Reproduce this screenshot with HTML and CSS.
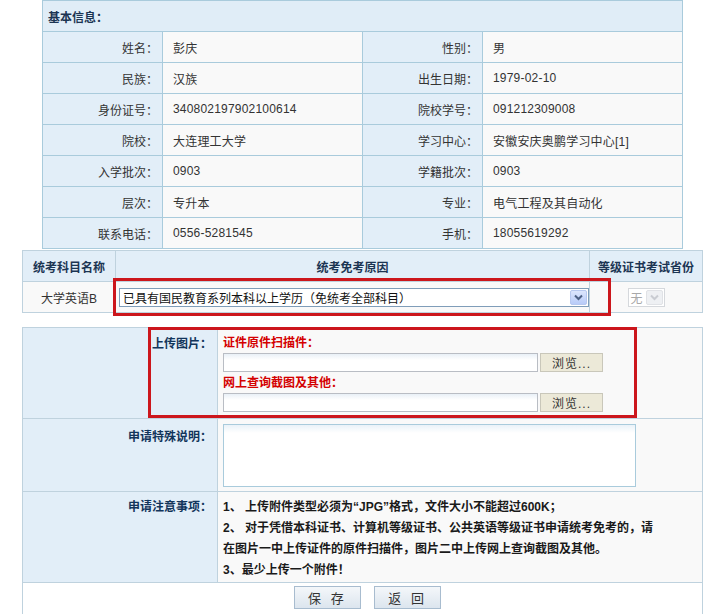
FILE: index.html
```html
<!DOCTYPE html>
<html>
    <head>
        <meta charset="utf-8">
        <title>统考免考申请</title>
        <link rel="stylesheet" href="styles.css">
    </head>
    <body>
        <div class="page">

            <table class="info">
                <col class="c-label"><col class="c-value"><col class="c-label"><col class="c-value">
                <tr>
                    <th colspan="4" class="info-title">基本信息：</th>
                </tr>
                <tr>
                    <td class="label">姓名：</td><td class="value">彭庆</td>
                    <td class="label">性别：</td><td class="value">男</td>
                </tr>
                <tr>
                    <td class="label">民族：</td><td class="value">汉族</td>
                    <td class="label">出生日期：</td><td class="value">1979-02-10</td>
                </tr>
                <tr>
                    <td class="label">身份证号：</td><td class="value">340802197902100614</td>
                    <td class="label">院校学号：</td><td class="value">091212309008</td>
                </tr>
                <tr>
                    <td class="label">院校：</td><td class="value">大连理工大学</td>
                    <td class="label">学习中心：</td><td class="value">安徽安庆奥鹏学习中心[1]</td>
                </tr>
                <tr>
                    <td class="label">入学批次：</td><td class="value">0903</td>
                    <td class="label">学籍批次：</td><td class="value">0903</td>
                </tr>
                <tr>
                    <td class="label">层次：</td><td class="value">专升本</td>
                    <td class="label">专业：</td><td class="value">电气工程及其自动化</td>
                </tr>
                <tr>
                    <td class="label">联系电话：</td><td class="value">0556-5281545</td>
                    <td class="label">手机：</td><td class="value">18055619292</td>
                </tr>
            </table>

            <table class="exempt">
                <col class="c-subject"><col class="c-reason"><col class="c-province">
                <tr>
                    <th>统考科目名称</th>
                    <th>统考免考原因</th>
                    <th>等级证书考试省份</th>
                </tr>
                <tr>
                    <td class="subject">大学英语B</td>
                    <td class="reason">
                        <div class="select-box">
                            <span class="select-text">已具有国民教育系列本科以上学历（免统考全部科目）</span>
                            <span class="select-arrow">
                                <svg width="9" height="7" viewBox="0 0 9 7"><polyline points="1,1.5 4.5,5 8,1.5" fill="none" stroke="#4d6185" stroke-width="2"/></svg>
                            </span>
                        </div>
                    </td>
                    <td class="province">
                        <div class="select-box select-off">
                            <span class="select-text">无</span>
                            <span class="select-arrow">
                                <svg width="9" height="7" viewBox="0 0 9 7"><polyline points="1,1.5 4.5,5 8,1.5" fill="none" stroke="#c9ccd2" stroke-width="2"/></svg>
                            </span>
                        </div>
                    </td>
                </tr>
            </table>

            <table class="apply">
                <col class="c-name"><col class="c-field">
                <tr class="row-upload">
                    <td class="name">上传图片：</td>
                    <td class="field">
                        <div class="upload-title">证件原件扫描件：</div>
                        <div class="upload-line">
                            <input class="upload-path" type="text">
                            <button class="browse-button">浏览...</button>
                        </div>
                        <div class="upload-title">网上查询截图及其他：</div>
                        <div class="upload-line">
                            <input class="upload-path" type="text">
                            <button class="browse-button">浏览...</button>
                        </div>
                    </td>
                </tr>
                <tr class="row-remark">
                    <td class="name">申请特殊说明：</td>
                    <td class="field">
                        <textarea class="remark"></textarea>
                    </td>
                </tr>
                <tr class="row-notes">
                    <td class="name">申请注意事项：</td>
                    <td class="field notes">
                        1、 上传附件类型必须为“JPG”格式，文件大小不能超过600K；<br>
                        2、 对于凭借本科证书、计算机等级证书、公共英语等级证书申请统考免考的，请<br>
                        在图片一中上传证件的原件扫描件，图片二中上传网上查询截图及其他。<br>
                        3、最少上传一个附件！
                    </td>
                </tr>
                <tr class="row-actions">
                    <td colspan="2" class="actions">
                        <button class="form-button">保 存</button>
                        <button class="form-button">返 回</button>
                    </td>
                </tr>
            </table>

            <div class="mark mark-reason"></div>
            <div class="mark mark-upload"></div>

        </div>
    </body>
</html>
```

FILE: styles.css
```css
body {
    margin: 0;
    background: #ffffff;
    color: #333333;
    font-family: "Liberation Sans", "Noto Sans CJK SC", sans-serif;
    font-size: 12px;
}

.page {
    position: relative;
    width: 709px;
}

table {
    border-collapse: collapse;
    table-layout: fixed;
}

td, th {
    padding: 0;
    font-size: 12px;
}

/* basic info */

.info {
    margin-left: 42px;
    width: 641px;
}

.info .c-label {
    width: 120px;
}

.info .c-value {
    width: 200px;
}

.info td, .info th {
    border: 1px solid #a9cbdc;
    height: 30px;
}

.info-title {
    background: #e0edf7;
    color: #1c3553;
    text-align: left;
    padding-left: 5px;
    font-weight: bold;
}

.label {
    background: #e2eef8;
    text-align: right;
    padding-right: 4px;
}

.value {
    background: #f9f9f9;
    padding-left: 10px;
    letter-spacing: 0.2px;
}

/* exemption subject */

.exempt {
    margin: 1px 0 0 22px;
    width: 681px;
}

.exempt .c-subject {
    width: 93px;
}

.exempt .c-reason {
    width: 474px;
}

.exempt .c-province {
    width: 113px;
}

.exempt td, .exempt th {
    border: 1px solid #bfd2de;
    height: 30px;
}

.exempt th {
    background: #e2eef8;
    color: #1c3553;
    font-weight: bold;
}

.exempt td {
    background: #f9f9f9;
}

.subject {
    text-align: center;
}

.reason {
    padding-left: 3px;
}

.province {
    text-align: center;
}

.select-box {
    display: inline-flex;
    align-items: center;
    box-sizing: border-box;
    width: 470px;
    height: 19px;
    border: 1px solid #7f9db9;
    background: #ffffff;
    vertical-align: middle;
}

.select-text {
    flex: 1;
    padding-left: 3px;
    text-align: left;
    color: #111111;
    white-space: nowrap;
    overflow: hidden;
}

.select-arrow {
    display: flex;
    align-items: center;
    justify-content: center;
    box-sizing: border-box;
    width: 17px;
    height: 15px;
    margin-right: 1px;
    border: 1px solid #b7c8ef;
    border-radius: 2px;
    background: linear-gradient(#dce6fd, #b8cbf8);
}

.select-off {
    width: 37px;
    border-color: #d5d8dc;
}

.select-off .select-text {
    color: #a8a8a8;
    padding-left: 2px;
}

.select-off .select-arrow {
    border-color: #e0e2e6;
    background: #eef0f3;
}

/* application */

.apply {
    margin: 14px 0 0 22px;
    width: 681px;
}

.apply .c-name {
    width: 195px;
}

.apply td {
    border: 1px solid #bfd2de;
}

.name {
    background: #e2eef8;
    color: #12355b;
    font-weight: bold;
    text-align: right;
    vertical-align: top;
    padding-right: 5px;
}

.field {
    background: #f9f9f9;
    vertical-align: top;
    padding-left: 5px;
}

.row-upload td {
    height: 90px;
}

.row-upload .name {
    padding-top: 6px;
    height: 84px;
}

.row-upload .field {
    padding-top: 5px;
    height: 85px;
}

.upload-title {
    color: #d40000;
    font-weight: bold;
    line-height: 20px;
}

.upload-line {
    display: flex;
    height: 19px;
    margin-bottom: 1px;
}

.upload-path {
    box-sizing: border-box;
    width: 315px;
    height: 19px;
    margin: 0;
    border: 1px solid #b9bdc4;
    background: linear-gradient(#e9f0f7, #ffffff 6px);
}

.browse-button {
    box-sizing: border-box;
    width: 63px;
    height: 19px;
    margin: 0 0 0 2px;
    padding: 0;
    border: 1px solid #c9c7ba;
    background: #ece9d8;
    color: #333333;
    font-family: "Liberation Sans", "Noto Sans CJK SC", sans-serif;
    font-size: 12px;
    letter-spacing: 1px;
}

.row-remark .name {
    padding-top: 8px;
    height: 64px;
}

.row-remark .field {
    padding-top: 5px;
    height: 67px;
}

.remark {
    display: block;
    box-sizing: border-box;
    width: 413px;
    height: 63px;
    margin: 0;
    border: 1px solid #a9cbdc;
    background: linear-gradient(#eaf2f8, #ffffff 8px);
    resize: none;
}

.row-notes .name {
    padding-top: 5px;
    height: 85px;
}

.notes {
    padding-top: 5px;
    height: 85px;
    color: #1a1a1a;
    font-weight: bold;
    line-height: 21px;
}

.actions {
    background: #ffffff;
    height: 40px;
    vertical-align: top;
    text-align: center;
    padding: 3px 0 0 10px;
}

.form-button {
    box-sizing: border-box;
    width: 67px;
    height: 23px;
    margin: 0 5px;
    padding: 0;
    border: 1px solid #a8bccf;
    background: linear-gradient(#f4f7fa, #dce5ee);
    color: #333333;
    font-family: "Liberation Sans", "Noto Sans CJK SC", sans-serif;
    font-size: 13px;
    letter-spacing: 3px;
}

/* red annotation frames */

.mark {
    position: absolute;
    box-sizing: border-box;
    border: 3px solid #cc161c;
}

.mark-reason {
    left: 113px;
    top: 278px;
    width: 498px;
    height: 38px;
}

.mark-upload {
    left: 148px;
    top: 327px;
    width: 489px;
    height: 91px;
}
```
